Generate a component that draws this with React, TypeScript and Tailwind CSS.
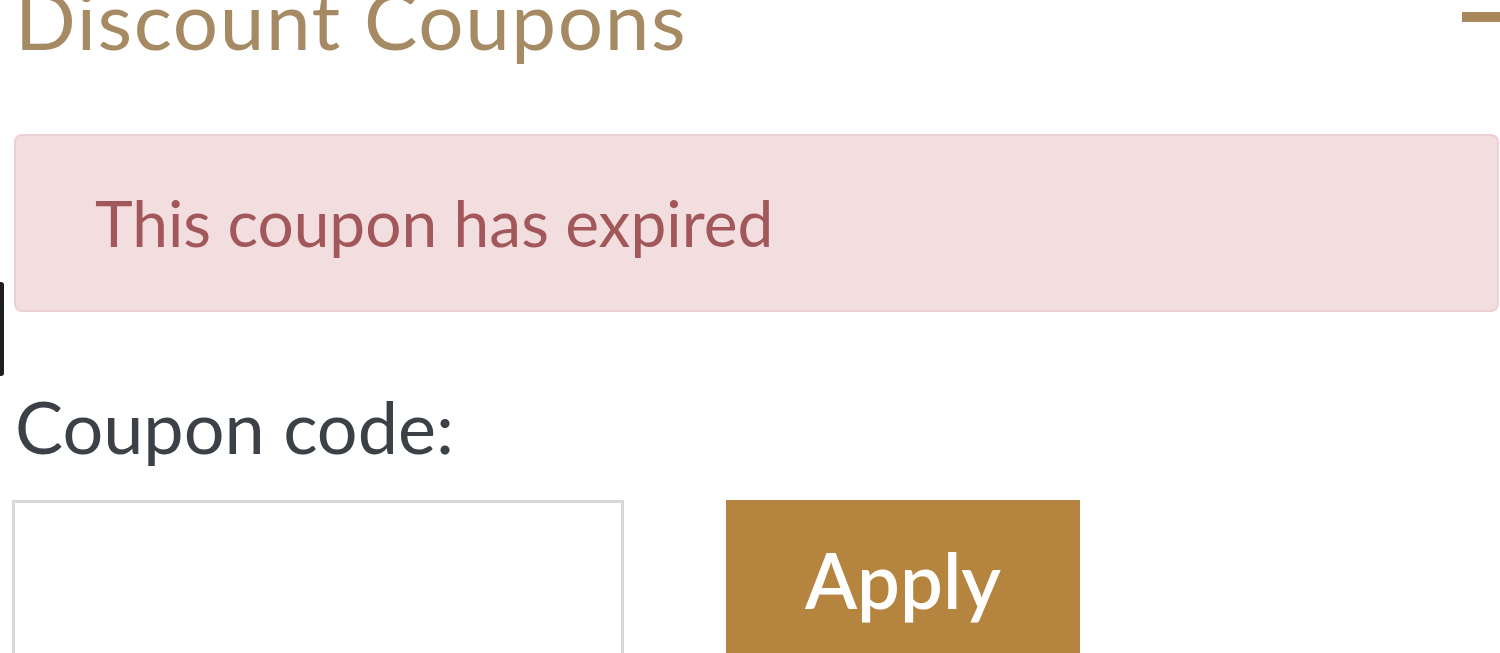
export default function App() {
  return (
    <div className="relative h-[653px] w-[1500px] overflow-hidden bg-white font-['Lato',sans-serif]">
      {/* section header */}
      <div className="-mt-[21px] flex items-start justify-between pl-[15px]">
        <h2 className="text-[80px] font-normal leading-none tracking-[0.02em] text-[#a68a63]">Discount Coupons</h2>
        <span className="-mr-[10px] mt-[33px] h-[10px] w-[48px] bg-[#a8875c]" />
      </div>

      {/* error notice */}
      <div className="ml-[14px] mt-[75px] flex h-[178px] w-[1485px] items-center rounded-[8px] border-2 border-[#ecd0d3] bg-[#f2dedf] pl-[79px]">
        <p className="text-[64px] leading-none text-[#a2585a]">This coupon has expired</p>
      </div>

      <form className="mt-[78px] pl-[15px]">
        <label className="block text-[72px] leading-none text-[#3b4146]">Coupon code:</label>
        <div className="mt-[38px] flex items-start">
          <input className="-ml-[3px] h-[170px] w-[612px] border-[3px] border-[#d6d9db] bg-white outline-none" />
          <button
            type="button"
            className="ml-[102px] h-[170px] w-[354px] bg-[#b5843f] pb-[10px] text-[76px] font-semibold text-white"
          >
            Apply
          </button>
        </div>
      </form>

      {/* dark edge at the left */}
      <span className="absolute left-[-5px] top-[282px] h-[94px] w-[9px] rounded-[3px] bg-[#1f1f1f]" />
    </div>
  )
}
